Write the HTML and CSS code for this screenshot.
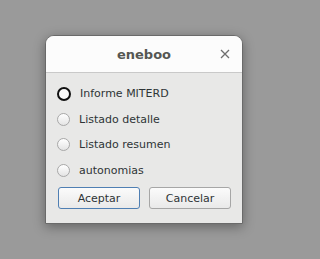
FILE: index.html
```html
<!DOCTYPE html>
<html lang="es">
<head>
<meta charset="utf-8">
<title>eneboo</title>
<link rel="stylesheet" href="styles.css">
</head>
<body>
<div class="desk">
  <div class="window">
    <div class="header">
      <span class="spacer"></span>
      <span class="title">eneboo</span>
      <span class="close">
        <svg width="10" height="10" viewBox="0 0 10 10"><path d="M1 1 L9 9 M9 1 L1 9" stroke="#6f6f6f" stroke-width="1.3" fill="none"/></svg>
      </span>
    </div>
    <div class="content">
      <div class="options">
        <label class="row"><span class="radio focus"></span><span class="label">Informe MITERD</span></label>
        <label class="row"><span class="radio"></span><span class="label">Listado detalle</span></label>
        <label class="row"><span class="radio"></span><span class="label">Listado resumen</span></label>
        <label class="row"><span class="radio"></span><span class="label">autonomias</span></label>
      </div>
      <div class="buttons">
        <button class="btn default">Aceptar</button>
        <button class="btn">Cancelar</button>
      </div>
    </div>
  </div>
</div>
</body>
</html>
```
FILE: styles.css
```css
html, body {
  margin: 0;
  padding: 0;
  background: #9a9a9a;
  width: 271px;
  height: 259px;
  overflow: hidden;
}
.desk {
  padding: 35px 0 0 45px;
}
.window {
  width: 196px;
  border: 1px solid #6a6a6a;
  border-radius: 9px 9px 0 0;
  box-shadow: 0 3px 12px rgba(0, 0, 0, 0.35);
  overflow: hidden;
  font-family: "DejaVu Sans", sans-serif;
  font-size: 11px;
  color: #2e3436;
  background: #e8e8e7;
}
.header {
  display: grid;
  grid-template-columns: 1fr auto 1fr;
  align-items: center;
  height: 36px;
  background: #fcfcfc;
  border-bottom: 1px solid #c9c9c9;
}
.title {
  font-weight: bold;
  font-size: 13px;
  color: #555753;
}
.close {
  justify-self: end;
  width: 16px;
  height: 16px;
  margin-right: 9px;
  display: flex;
  align-items: center;
  justify-content: center;
}
.close svg {
  display: block;
}
.content {
  height: 150px;
  padding: 8px 11px 0 11px;
  box-sizing: border-box;
}
.row {
  display: flex;
  align-items: center;
  height: 25.5px;
}
.radio {
  width: 13px;
  height: 13px;
  box-sizing: border-box;
  border-radius: 50%;
  border: 1px solid #a8a8a8;
  background: linear-gradient(#ffffff, #e4e4e4);
  margin-right: 9px;
  flex: none;
}
.radio.focus {
  width: 14px;
  height: 14px;
  border: 2px solid #111111;
  background: #fafafa;
}
.buttons {
  display: flex;
  gap: 9px;
  margin-top: 4px;
  padding-left: 1px;
}
.btn {
  width: 82px;
  height: 22px;
  box-sizing: border-box;
  border: 1px solid #a6a6a6;
  border-radius: 3px;
  background: linear-gradient(#fbfbfb, #e9e9e9);
  font-family: "DejaVu Sans", sans-serif;
  font-size: 11px;
  color: #2e3436;
  padding: 0;
}
.btn.default {
  border-color: #4f7fb3;
}
```
